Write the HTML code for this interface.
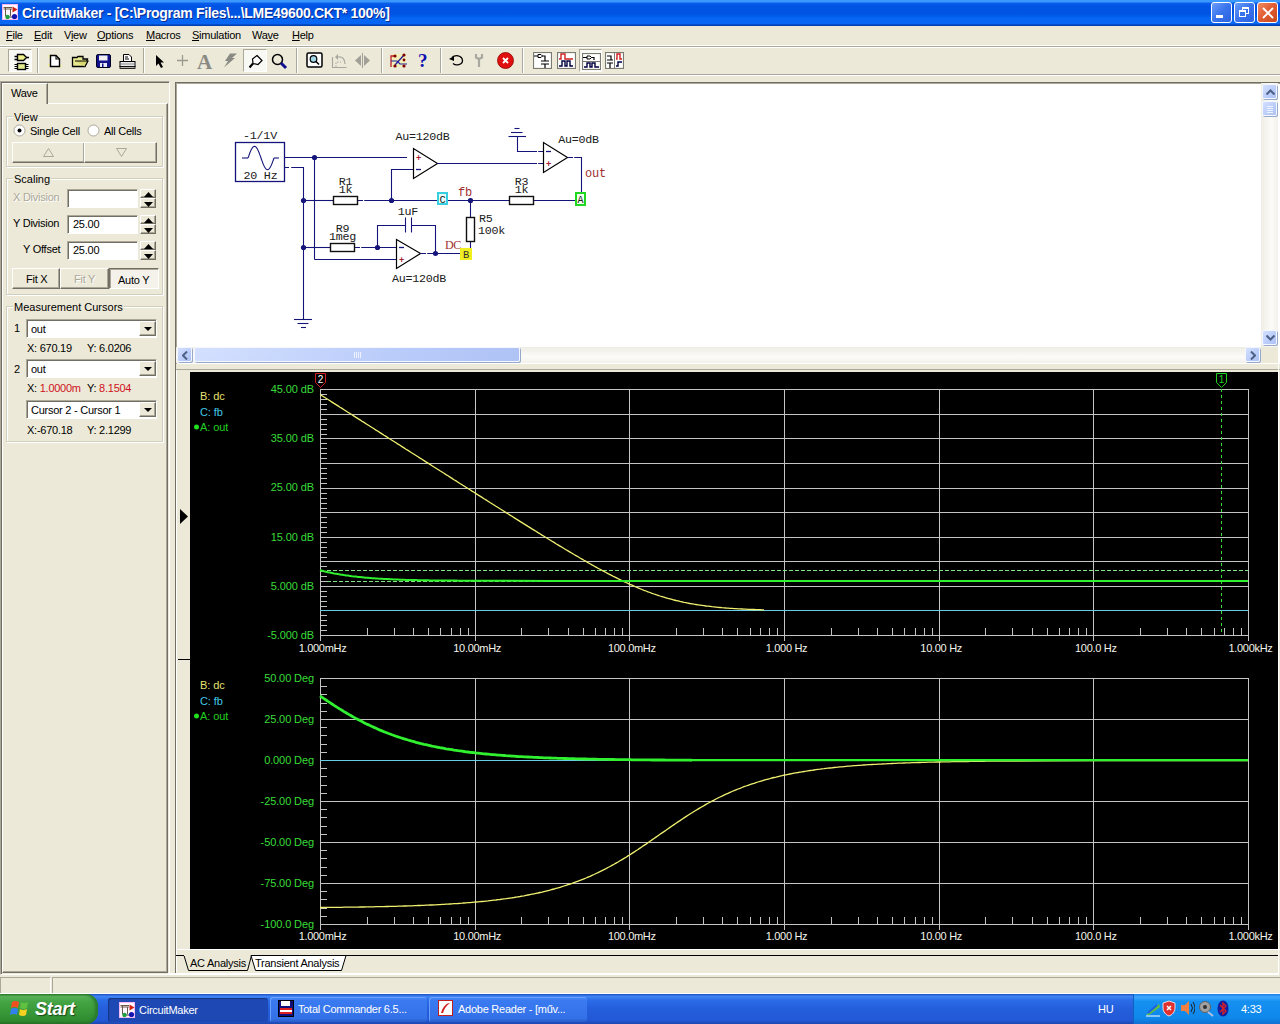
<!DOCTYPE html>
<html><head><meta charset="utf-8"><style>
*{margin:0;padding:0;box-sizing:border-box}
html,body{width:1280px;height:1024px;overflow:hidden;background:#ECE9D8;font-family:"Liberation Sans",sans-serif;font-size:11px;color:#000}
.a{position:absolute;white-space:nowrap;letter-spacing:-0.25px}
.u{text-decoration:underline}
.btn{position:absolute;background:#ECE9D8;border-top:1px solid #fff;border-left:1px solid #fff;border-right:1px solid #716F64;border-bottom:1px solid #716F64;box-shadow:inset -1px -1px 0 #ACA899}
.edit{position:absolute;background:#fff;border-top:1px solid #ACA899;border-left:1px solid #ACA899;border-bottom:1px solid #fff;border-right:1px solid #fff;box-shadow:inset 1px 1px 0 #716F64}
.grp{position:absolute;border:1px solid #D0D0BF;box-shadow:inset 1px 1px 0 #fff, 1px 1px 0 #fff}
.gl{position:absolute;background:#ECE9D8;padding:0 1px;line-height:12px}
.sep{position:absolute;top:48px;width:2px;height:25px;border-left:1px solid #ACA899;border-right:1px solid #fff}
</style></head><body>

<div class="a" style="left:0;top:0;width:1280px;height:26px;background:linear-gradient(#3A98FF 0px,#3A98FF 1.5px,#0A5CEB 3.5px,#0053E3 6px,#0054E4 14px,#005EEE 16.5px,#0866F4 18px,#0866F4 23.5px,#0044BC 25px,#003AA8 26px)"></div>
<svg class="a" style="left:2px;top:4px" width="16" height="16">
 <rect x="0.5" y="0.5" width="15" height="15" fill="#FFF6FF" stroke="#F4B8F4"/>
 <path d="M1.5 3.5H10M1.5 5H10M3.5 3V12.5M8.5 5V12" stroke="#6A5A4A" stroke-width="1" fill="none"/>
 <path d="M5 13H12" stroke="#404040"/>
 <path d="M10.5 2.5L15.5 5.5L10.5 8.5Z" fill="#D02010"/><circle cx="12.5" cy="12.5" r="2.6" fill="#1414B0"/><circle cx="5.5" cy="13" r="2.2" fill="#20A040"/>
</svg>
<div class="a" style="left:22px;top:5px;color:#fff;font-weight:bold;font-size:14px;letter-spacing:-0.3px;text-shadow:1px 1px 0 #0A2A90">CircuitMaker - [C:\Program Files\...\LME49600.CKT* 100%]</div>
<div class="a" style="left:1211px;top:2px;width:21px;height:21px;border:1px solid #fff;border-radius:3px;background:linear-gradient(135deg,#6A9CFA,#3A74EC 50%,#2A62E0)"><div class="a" style="left:4px;top:12px;width:7px;height:3px;background:#fff"></div></div>
<div class="a" style="left:1234px;top:2px;width:21px;height:21px;border:1px solid #fff;border-radius:3px;background:linear-gradient(135deg,#6A9CFA,#3A74EC 50%,#2A62E0)"><div class="a" style="left:7px;top:4px;width:7px;height:7px;border:1px solid #fff;border-top-width:2px"></div><div class="a" style="left:4px;top:7px;width:7px;height:7px;border:1px solid #fff;border-top-width:2px;background:#3A74EC"></div></div>
<div class="a" style="left:1257px;top:2px;width:21px;height:21px;border:1px solid #fff;border-radius:3px;background:linear-gradient(135deg,#F08A60,#E05A30 50%,#C84A20)">
 <svg class="a" style="left:3px;top:3px" width="14" height="14"><path d="M2 2L12 12M12 2L2 12" stroke="#fff" stroke-width="1.9"/></svg></div>

<div class="a" style="left:6px;top:29px"><span class="u">F</span>ile</div>
<div class="a" style="left:34px;top:29px"><span class="u">E</span>dit</div>
<div class="a" style="left:64px;top:29px">V<span class="u">i</span>ew</div>
<div class="a" style="left:97px;top:29px"><span class="u">O</span>ptions</div>
<div class="a" style="left:146px;top:29px"><span class="u">M</span>acros</div>
<div class="a" style="left:192px;top:29px"><span class="u">S</span>imulation</div>
<div class="a" style="left:252px;top:29px">Wa<span class="u">v</span>e</div>
<div class="a" style="left:292px;top:29px"><span class="u">H</span>elp</div>
<div class="a" style="left:0;top:45px;width:1280px;height:1px;background:#FFFFFF"></div><div class="a" style="left:0;top:46px;width:1280px;height:1px;background:#ACA899"></div>
<div class="a" style="left:0;top:47px;width:1280px;height:1px;background:#fff"></div>
<div class="a" style="left:0;top:74px;width:1280px;height:1px;background:#ACA899"></div>
<div class="a" style="left:0;top:75px;width:1280px;height:1px;background:#fff"></div>

<div class="a" style="left:8px;top:49px;width:24px;height:23px;background:#F8F8F4;border-top:1px solid #ACA899;border-left:1px solid #ACA899;border-right:1px solid #fff;border-bottom:1px solid #fff"></div>
<svg class="a" style="left:8px;top:49px" width="24" height="23"><path d="M9.5 5.5H15.5L18.5 8.5L15.5 11.5H9.5Z" fill="#EEF08A" stroke="#000" stroke-width="1.4"/><path d="M6.5 7.5H9M6.5 10.5H9M18.5 8.5H21" stroke="#000" stroke-width="1.3"/><rect x="9.5" y="14.5" width="8" height="6" fill="#E4EA90" stroke="#000" stroke-width="1.4"/><path d="M6.5 15.5H9M6.5 17.5H9M6.5 19.5H9M18 15.5H20.5M18 17.5H20.5M18 19.5H20.5" stroke="#000" stroke-width="1.2"/></svg>
<div class="sep" style="left:37px"></div>
<div class="sep" style="left:143px"></div>
<div class="sep" style="left:296px"></div>
<div class="sep" style="left:381px"></div>
<div class="sep" style="left:440px"></div>
<div class="sep" style="left:522px"></div>
<svg class="a" style="left:47px;top:53px" width="16" height="16"><circle cx="3" cy="3" r="1.5" fill="#F8F870" opacity="0.7"/><circle cx="13" cy="13" r="1.5" fill="#F8F870" opacity="0.7"/><circle cx="2" cy="12" r="1.2" fill="#F8F870" opacity="0.6"/><path d="M3.5 2.5H9L12.5 6V13.5H3.5Z" fill="#fff" stroke="#000" stroke-width="1.4"/><path d="M9 2.5V6H12.5" fill="none" stroke="#000" stroke-width="1.1"/></svg>
<svg class="a" style="left:71px;top:55px" width="18" height="13"><path d="M1.5 2.5H6L7 1.5H12V4H16.5L14 11.5H1.5Z" fill="#E8E890" stroke="#000" stroke-width="1.3"/><path d="M4 6H17L14 11.5" fill="#D8D870" stroke="#000" stroke-width="1.2"/></svg>
<svg class="a" style="left:96px;top:54px" width="15" height="14"><rect x="0.5" y="0.5" width="14" height="13" rx="1.5" fill="#12128C" stroke="#000020"/><rect x="3" y="1.5" width="8.5" height="5" fill="#F0F0F0"/><rect x="4" y="9" width="7" height="4" fill="#E8E8F0"/><rect x="6" y="9.5" width="1.5" height="3.5" fill="#12128C"/></svg>
<svg class="a" style="left:119px;top:53px" width="17" height="16"><path d="M4.5 1.5H10L12.5 4V8.5H4.5Z" fill="#fff" stroke="#000"/><path d="M6 4H9M6 6H10" stroke="#000"/><rect x="1" y="8.5" width="15" height="5" fill="#E8E8E8" stroke="#000"/><path d="M2 11H15" stroke="#909090"/><rect x="1" y="13.5" width="15" height="2" fill="#B0B0A8" stroke="#000" stroke-width="0.8"/></svg>
<svg class="a" style="left:155px;top:54px" width="10" height="15"><path d="M1 1V12L3.5 9.5L6 14L8 13L5.5 8.5H9Z" fill="#000"/></svg>
<svg class="a" style="left:176px;top:54px" width="13" height="13"><path d="M6.5 1V12M1 6.5H12" stroke="#9A9A90" stroke-width="1.3"/></svg>
<div class="a" style="left:197px;top:50px;font-family:'Liberation Serif',serif;font-size:21px;font-weight:bold;color:#8A8A84">A</div>
<svg class="a" style="left:222px;top:53px" width="16" height="15"><path d="M8 0.5H15L10 5H13L2 14.5L6 8H3Z" fill="#8A8A84"/></svg>
<div class="a" style="left:243px;top:49px;width:24px;height:23px;background:#F8F8F4;border-top:1px solid #ACA899;border-left:1px solid #ACA899;border-right:1px solid #fff;border-bottom:1px solid #fff"></div>
<svg class="a" style="left:248px;top:54px" width="15" height="15"><path d="M9 1.5L14 6.5L10 10.5L5 9.5L4.5 5Z" fill="#fff" stroke="#000" stroke-width="1.2"/><path d="M5 9.5L1.5 13.5" stroke="#000" stroke-width="2"/></svg>
<svg class="a" style="left:271px;top:53px" width="17" height="17"><circle cx="6.5" cy="6.5" r="5" fill="none" stroke="#000" stroke-width="1.5"/><path d="M10 10L15 15" stroke="#101090" stroke-width="3"/></svg>
<svg class="a" style="left:306px;top:52px" width="18" height="17"><rect x="1" y="1" width="15" height="14" rx="1.5" fill="#fff" stroke="#000" stroke-width="1.5"/><circle cx="7.5" cy="7" r="3.3" fill="#A0D8E8" stroke="#000" stroke-width="1.2"/><path d="M10 9.5L13 12.5" stroke="#000" stroke-width="1.6"/></svg>
<svg class="a" style="left:331px;top:53px" width="17" height="16"><path d="M1.5 4V14.5H15.5" fill="none" stroke="#A8A8A0" stroke-width="1.2"/><path d="M5 14V9H10" fill="none" stroke="#A8A8A0" stroke-dasharray="1.5,1.5"/><path d="M7 4C11 3 14 6 14 11" fill="none" stroke="#A8A8A0" stroke-width="1.2"/><path d="M7 1V7L4 4Z" fill="#A8A8A0"/></svg>
<svg class="a" style="left:354px;top:53px" width="17" height="15"><path d="M7 2L1 7.5L7 13Z" fill="#A0A098"/><path d="M10 2L16 7.5L10 13Z" fill="#A0A098"/><path d="M8.5 0V15" stroke="#A0A098"/></svg>
<svg class="a" style="left:390px;top:52px" width="18" height="17"><rect x="2" y="2" width="14" height="13" fill="#F8F0A0" opacity="0.6"/><path d="M1 15V4H5" fill="none" stroke="#C02020" stroke-width="1.3"/><path d="M5 13L14 3" stroke="#2020A0" stroke-width="1.3"/><path d="M1 9H7L10 12H17" fill="none" stroke="#2020A0" stroke-width="1.2"/><circle cx="5" cy="4" r="1.6" fill="#800000"/><circle cx="14" cy="3" r="1.6" fill="#800000"/><circle cx="5" cy="14" r="1.6" fill="#800000"/><circle cx="14" cy="14" r="1.6" fill="#800000"/><circle cx="14" cy="8" r="1.4" fill="#800000"/></svg>
<div class="a" style="left:418px;top:50px;font-family:'Liberation Serif',serif;font-size:19px;font-weight:bold;color:#1010B0">?</div>
<svg class="a" style="left:448px;top:53px" width="17" height="15"><path d="M4 4.5C7 1.5 14 2 14.5 7.5C14.5 12 8 13 5 10.5" fill="none" stroke="#000" stroke-width="1.3"/><path d="M1 6L6 3V8Z" fill="#000"/></svg>
<svg class="a" style="left:474px;top:53px" width="10" height="16"><path d="M2 1V4.5L5 6L8 4.5V1M5 6V14" fill="none" stroke="#A8A8A0" stroke-width="2.2"/></svg>
<svg class="a" style="left:497px;top:52px" width="17" height="17"><circle cx="8.5" cy="8.5" r="8" fill="#E01010"/><circle cx="8.5" cy="8.5" r="8" fill="none" stroke="#900000" stroke-width="0.8"/><path d="M6 6L11 11M11 6L6 11" stroke="#fff" stroke-width="1.8"/></svg>
<svg class="a" style="left:533px;top:52px" width="19" height="17"><rect x="0.5" y="0.5" width="18" height="16" fill="#fff" stroke="#7A7A70" stroke-width="1.2"/><path d="M1 4H5M9 4H12V9M12 12V16M8 9H16M8 12H16" fill="none" stroke="#000" stroke-width="1.2"/><path d="M5 2.5H8L9.5 4L8 5.5H5Z" fill="#fff" stroke="#000"/></svg>
<svg class="a" style="left:557px;top:52px" width="19" height="17"><rect x="0.5" y="0.5" width="18" height="16" fill="#fff" stroke="#7A7A70" stroke-width="1.2"/><path d="M2 7H4V2H8V7H16" fill="none" stroke="#D02020" stroke-width="1.4"/><path d="M2 14H5V9H8V14H10V9H13V14H16" fill="none" stroke="#000040" stroke-width="1.4"/></svg>
<div class="a" style="left:579px;top:49px;width:23px;height:23px;background:#F8F8F4;border-top:1px solid #ACA899;border-left:1px solid #ACA899;border-right:1px solid #fff;border-bottom:1px solid #fff"></div>
<svg class="a" style="left:582px;top:53px" width="19" height="17"><rect x="0.5" y="0.5" width="18" height="16" fill="#fff" stroke="#7A7A70" stroke-width="1.2"/><path d="M1 8.5H18" stroke="#7A7A70"/><path d="M1 4.5H5M9 4.5H12V7" fill="none" stroke="#000" stroke-width="1.2"/><path d="M5 3H8L9.5 4.5L8 6H5Z" fill="#fff" stroke="#000"/><path d="M2 14H5V10H8V14H10V10H13V14H17" fill="none" stroke="#000040" stroke-width="1.4"/></svg>
<svg class="a" style="left:605px;top:52px" width="19" height="17"><rect x="0.5" y="0.5" width="18" height="16" fill="#fff" stroke="#7A7A70" stroke-width="1.2"/><path d="M9.5 1V16" stroke="#7A7A70"/><path d="M2 4H6V8M2 8H8M2 11H8M5 11V16" fill="none" stroke="#000" stroke-width="1.2"/><path d="M11 7H12V2H15V7H17" fill="none" stroke="#D02020" stroke-width="1.4"/><path d="M11 14H13V10H17" fill="none" stroke="#000040" stroke-width="1.4"/></svg>
<div class="a" style="left:0;top:81px;width:170px;height:894px;border-top:1px solid #ACA899;border-left:1px solid #ACA899;border-right:1px solid #fff;border-bottom:1px solid #fff;box-shadow:inset 1px 1px 0 #716F64"></div>
<div class="a" style="left:2px;top:103px;width:166px;height:870px;border-top:1px solid #fff;border-left:1px solid #fff;border-right:1px solid #716F64;border-bottom:1px solid #716F64;box-shadow:inset -1px -1px 0 #ACA899"></div>
<div class="a" style="left:2px;top:83px;width:46px;height:21px;background:#ECE9D8;border-top:1px solid #fff;border-left:1px solid #fff;border-right:1px solid #716F64;box-shadow:inset -1px 0 0 #ACA899"></div>
<div class="a" style="left:11px;top:87px">Wave</div>
<div class="grp" style="left:6px;top:116px;width:157px;height:51px"></div>
<div class="gl" style="left:13px;top:111px">View</div>
<svg class="a" style="left:13px;top:124px" width="13" height="13"><circle cx="6.5" cy="6.5" r="5.5" fill="#fff" stroke="#ACA899"/><circle cx="6.5" cy="6.5" r="2" fill="#000"/></svg>
<div class="a" style="left:30px;top:125px">Single Cell</div>
<svg class="a" style="left:87px;top:124px" width="13" height="13"><circle cx="6.5" cy="6.5" r="5.5" fill="#fff" stroke="#ACA899"/></svg>
<div class="a" style="left:104px;top:125px">All Cells</div>
<div class="btn" style="left:12px;top:142px;width:73px;height:21px"><svg class="a" style="left:30px;top:5px" width="11" height="9"><path d="M5.5 0.5L10.5 8.5H0.5Z" fill="none" stroke="#ACA899"/></svg></div>
<div class="btn" style="left:84px;top:142px;width:73px;height:21px"><svg class="a" style="left:31px;top:5px" width="11" height="9"><path d="M0.5 0.5H10.5L5.5 8.5Z" fill="none" stroke="#ACA899"/></svg></div>
<div class="grp" style="left:6px;top:178px;width:157px;height:117px"></div>
<div class="gl" style="left:13px;top:173px">Scaling</div>
<div class="a" style="left:13px;top:191px;color:#ACA899;text-shadow:1px 1px 0 #fff">X Division</div>
<div class="edit" style="left:67px;top:189px;width:71px;height:19px"></div>
<div class="btn" style="left:140px;top:189px;width:16px;height:9px"><svg class="a" style="left:3px;top:2px" width="9" height="5"><path d="M4.5 0L9 5H0Z" fill="#000"/></svg></div><div class="btn" style="left:140px;top:198px;width:16px;height:10px"><svg class="a" style="left:3px;top:3px" width="9" height="5"><path d="M0 0H9L4.5 5Z" fill="#000"/></svg></div>
<div class="a" style="left:13px;top:217px">Y Division</div>
<div class="edit" style="left:67px;top:215px;width:71px;height:19px"><div class="a" style="left:5px;top:2px">25.00</div></div>
<div class="btn" style="left:140px;top:215px;width:16px;height:9px"><svg class="a" style="left:3px;top:2px" width="9" height="5"><path d="M4.5 0L9 5H0Z" fill="#000"/></svg></div><div class="btn" style="left:140px;top:224px;width:16px;height:10px"><svg class="a" style="left:3px;top:3px" width="9" height="5"><path d="M0 0H9L4.5 5Z" fill="#000"/></svg></div>
<div class="a" style="left:23px;top:243px">Y Offset</div>
<div class="edit" style="left:67px;top:241px;width:71px;height:19px"><div class="a" style="left:5px;top:2px">25.00</div></div>
<div class="btn" style="left:140px;top:241px;width:16px;height:9px"><svg class="a" style="left:3px;top:2px" width="9" height="5"><path d="M4.5 0L9 5H0Z" fill="#000"/></svg></div><div class="btn" style="left:140px;top:250px;width:16px;height:10px"><svg class="a" style="left:3px;top:3px" width="9" height="5"><path d="M0 0H9L4.5 5Z" fill="#000"/></svg></div>
<div class="btn" style="left:12px;top:268px;width:48px;height:21px"><div class="a" style="left:13px;top:4px">Fit X</div></div>
<div class="btn" style="left:60px;top:268px;width:49px;height:21px"><div class="a" style="left:13px;top:4px;color:#ACA899;text-shadow:1px 1px 0 #fff">Fit Y</div></div>
<div class="a" style="left:109px;top:268px;width:50px;height:21px;background:#F4F2EA;border-top:1px solid #716F64;border-left:1px solid #716F64;border-right:1px solid #fff;border-bottom:1px solid #fff;box-shadow:inset 1px 1px 0 #ACA899"><div class="a" style="left:8px;top:5px">Auto Y</div></div>
<div class="grp" style="left:6px;top:306px;width:157px;height:136px"></div>
<div class="gl" style="left:13px;top:301px">Measurement Cursors</div>
<div class="a" style="left:14px;top:322px">1</div>
<div class="edit" style="left:26px;top:319px;width:131px;height:19px"><div class="a" style="left:4px;top:3px">out</div><div class="btn" style="left:112px;top:1px;width:17px;height:15px"><svg class="a" style="left:4px;top:5px" width="8" height="4"><path d="M0 0H8L4 4Z" fill="#000"/></svg></div></div>
<div class="a" style="left:27px;top:342px">X: 670.19</div><div class="a" style="left:87px;top:342px">Y: 6.0206</div>
<div class="a" style="left:14px;top:363px">2</div>
<div class="edit" style="left:26px;top:359px;width:131px;height:19px"><div class="a" style="left:4px;top:3px">out</div><div class="btn" style="left:112px;top:1px;width:17px;height:15px"><svg class="a" style="left:4px;top:5px" width="8" height="4"><path d="M0 0H8L4 4Z" fill="#000"/></svg></div></div>
<div class="a" style="left:27px;top:382px">X: <span style="color:#D01020">1.0000m</span></div><div class="a" style="left:87px;top:382px">Y: <span style="color:#D01020">8.1504</span></div>
<div class="edit" style="left:26px;top:400px;width:131px;height:19px"><div class="a" style="left:4px;top:3px">Cursor 2 - Cursor 1</div><div class="btn" style="left:112px;top:1px;width:17px;height:15px"><svg class="a" style="left:4px;top:5px" width="8" height="4"><path d="M0 0H8L4 4Z" fill="#000"/></svg></div></div>
<div class="a" style="left:27px;top:424px">X:-670.18</div><div class="a" style="left:87px;top:424px">Y: 2.1299</div>
<div class="a" style="left:175px;top:82px;width:1105px;height:282px;background:#fff;border-top:1px solid #716F64;border-left:1px solid #716F64;box-shadow:inset 1px 1px 0 #ACA899"></div>
<svg class="a" style="left:0;top:0" width="1280" height="370"><rect x="235.5" y="142.5" width="49" height="39" fill="none" stroke="#14147A" stroke-width="1.3"/>
<polyline points="242,158 248,158" fill="none" stroke="#14147A" stroke-width="1.1"/>
<polyline points="248.0,158.0 248.7,156.2 249.3,154.4 249.9,152.7 250.6,151.1 251.2,149.7 251.9,148.5 252.6,147.6 253.2,146.9 253.8,146.4 254.5,146.3 255.2,146.4 255.8,146.9 256.4,147.6 257.1,148.5 257.8,149.7 258.4,151.1 259.1,152.7 259.7,154.4 260.4,156.2 261.0,158.0 261.6,159.8 262.3,161.6 262.9,163.3 263.6,164.9 264.2,166.3 264.9,167.5 265.6,168.4 266.2,169.1 266.9,169.6 267.5,169.7 268.1,169.6 268.8,169.1 269.4,168.4 270.1,167.5 270.8,166.3 271.4,164.9 272.1,163.3 272.7,161.6 273.4,159.8 274.0,158.0" fill="none" stroke="#14147A" stroke-width="1.1"/>
<polyline points="274,158 279,158" fill="none" stroke="#14147A" stroke-width="1.1"/>
<text x="260" y="139" fill="#202020" font-family="Liberation Mono" font-size="11.7" text-anchor="middle" >-1/1V</text>
<text x="260.5" y="179" fill="#202020" font-family="Liberation Mono" font-size="11.7" text-anchor="middle" >20 Hz</text>
<line x1="284.5" y1="157.5" x2="408" y2="157.5" stroke="#14147A" stroke-width="1.1"/>
<polyline points="284.5,167.5 303.5,167.5 303.5,319" fill="none" stroke="#14147A" stroke-width="1.1"/>
<line x1="314.5" y1="157.5" x2="314.5" y2="259.5" stroke="#14147A" stroke-width="1.1"/>
<circle cx="314.5" cy="157.5" r="2.6" fill="#14147A"/>
<line x1="303.5" y1="200.5" x2="333" y2="200.5" stroke="#14147A" stroke-width="1.1"/>
<line x1="358" y1="200.5" x2="575" y2="200.5" stroke="#14147A" stroke-width="1.1"/>
<rect x="333.5" y="196.5" width="24" height="8" fill="#fff" stroke="#101010" stroke-width="1.4"/>
<circle cx="303.5" cy="200.5" r="2.6" fill="#14147A"/>
<circle cx="391.5" cy="200.5" r="2.6" fill="#14147A"/>
<circle cx="470.5" cy="200.5" r="2.6" fill="#14147A"/>
<text x="345.5" y="185" fill="#202020" font-family="Liberation Mono" font-size="11.7" text-anchor="middle" >R1</text>
<text x="345.5" y="193" fill="#202020" font-family="Liberation Mono" font-size="11.7" text-anchor="middle" >1k</text>
<rect x="509.5" y="196.5" width="24" height="8" fill="#fff" stroke="#101010" stroke-width="1.4"/>
<text x="521.5" y="185" fill="#202020" font-family="Liberation Mono" font-size="11.7" text-anchor="middle" >R3</text>
<text x="521.5" y="193" fill="#202020" font-family="Liberation Mono" font-size="11.7" text-anchor="middle" >1k</text>
<text x="465" y="196" fill="#A03030" font-family="Liberation Mono" font-size="12" text-anchor="middle" >fb</text>
<polyline points="391.5,200.5 391.5,169.5 413,169.5" fill="none" stroke="#14147A" stroke-width="1.1"/>
<polygon points="413.5,148.5 413.5,178.5 437.5,163.5" fill="#fff" stroke="#000" stroke-width="1.2"/>
<line x1="437.5" y1="163.5" x2="543" y2="163.5" stroke="#14147A" stroke-width="1.1"/>
<text x="422.5" y="140" fill="#202020" font-family="Liberation Mono" font-size="11.7" text-anchor="middle" >Au=120dB</text>
<text x="418.5" y="161" fill="#A82030" font-family="Liberation Sans" font-size="9" font-weight="bold" text-anchor="middle">+</text>
<line x1="416" y1="169.5" x2="421" y2="169.5" stroke="#14147A" stroke-width="1.3"/>
<polyline points="517.5,136.5 517.5,151.5 543,151.5" fill="none" stroke="#14147A" stroke-width="1.1"/>
<line x1="508.5" y1="136.5" x2="526" y2="136.5" stroke="#14147A" stroke-width="1.1"/>
<line x1="511" y1="132.5" x2="522.5" y2="132.5" stroke="#14147A" stroke-width="1.1"/>
<line x1="514.5" y1="128.5" x2="519.5" y2="128.5" stroke="#14147A" stroke-width="1.1"/>
<polygon points="543.5,142.5 543.5,172.5 567.5,157.5" fill="#fff" stroke="#000" stroke-width="1.2"/>
<polyline points="567.5,157.5 581.5,157.5 581.5,193" fill="none" stroke="#14147A" stroke-width="1.1"/>
<text x="578.5" y="143" fill="#202020" font-family="Liberation Mono" font-size="11.7" text-anchor="middle" >Au=0dB</text>
<text x="548.5" y="167" fill="#A82030" font-family="Liberation Sans" font-size="9" font-weight="bold" text-anchor="middle">+</text>
<line x1="546" y1="151.5" x2="551" y2="151.5" stroke="#14147A" stroke-width="1.3"/>
<text x="595.5" y="177" fill="#A03030" font-family="Liberation Mono" font-size="12" text-anchor="middle" >out</text>
<rect x="438" y="193" width="9" height="11" fill="#E8FCFC" stroke="#38D0E0" stroke-width="2"/>
<text x="442.5" y="202.5" fill="#202020" font-family="Liberation Mono" font-size="10.5" text-anchor="middle" >C</text>
<rect x="576" y="193" width="9" height="12" fill="#F0FFF0" stroke="#20D820" stroke-width="2"/>
<text x="580.5" y="203" fill="#202020" font-family="Liberation Mono" font-size="10" text-anchor="middle" >A</text>
<line x1="303.5" y1="247.5" x2="330" y2="247.5" stroke="#14147A" stroke-width="1.1"/>
<line x1="355" y1="247.5" x2="396" y2="247.5" stroke="#14147A" stroke-width="1.1"/>
<rect x="330.5" y="243.5" width="24" height="8" fill="#fff" stroke="#101010" stroke-width="1.4"/>
<text x="342.5" y="232" fill="#202020" font-family="Liberation Mono" font-size="11.7" text-anchor="middle" >R9</text>
<text x="342.5" y="240" fill="#202020" font-family="Liberation Mono" font-size="11.7" text-anchor="middle" >1meg</text>
<circle cx="303.5" cy="247.5" r="2.6" fill="#14147A"/>
<circle cx="377.5" cy="247.5" r="2.6" fill="#14147A"/>
<polyline points="377.5,247.5 377.5,225.5 405.5,225.5" fill="none" stroke="#14147A" stroke-width="1.1"/>
<line x1="405.5" y1="217.5" x2="405.5" y2="232.5" stroke="#14147A" stroke-width="1.1"/>
<line x1="411.5" y1="217.5" x2="411.5" y2="232.5" stroke="#14147A" stroke-width="1.1"/>
<polyline points="411.5,225.5 435.5,225.5 435.5,253.5" fill="none" stroke="#14147A" stroke-width="1.1"/>
<text x="408" y="215" fill="#202020" font-family="Liberation Mono" font-size="11.7" text-anchor="middle" >1uF</text>
<line x1="314.5" y1="259.5" x2="396" y2="259.5" stroke="#14147A" stroke-width="1.1"/>
<polygon points="396.5,239.5 396.5,268.5 420.5,253.5" fill="#fff" stroke="#000" stroke-width="1.2"/>
<line x1="420.5" y1="253.5" x2="461" y2="253.5" stroke="#14147A" stroke-width="1.1"/>
<circle cx="435.5" cy="253.5" r="2.6" fill="#14147A"/>
<text x="401.5" y="263" fill="#A82030" font-family="Liberation Sans" font-size="9" font-weight="bold" text-anchor="middle">+</text>
<line x1="399" y1="247.5" x2="404" y2="247.5" stroke="#14147A" stroke-width="1.3"/>
<text x="419" y="282" fill="#202020" font-family="Liberation Mono" font-size="11.7" text-anchor="middle" >Au=120dB</text>
<line x1="470.5" y1="200.5" x2="470.5" y2="217" stroke="#14147A" stroke-width="1.1"/>
<line x1="470.5" y1="241.5" x2="470.5" y2="248" stroke="#14147A" stroke-width="1.1"/>
<rect x="466.5" y="217.5" width="8" height="24" fill="#fff" stroke="#101010" stroke-width="1.4"/>
<text x="479" y="222" fill="#202020" font-family="Liberation Mono" font-size="11.7" text-anchor="start" >R5</text>
<text x="478" y="234" fill="#202020" font-family="Liberation Mono" font-size="11.7" text-anchor="start" >100k</text>
<text x="453" y="249" fill="#A03030" font-family="Liberation Serif" font-size="12" text-anchor="middle" >DC</text>
<rect x="460" y="248" width="12" height="12" fill="#F0F020"/>
<text x="466" y="258" fill="#303030" font-family="Liberation Mono" font-size="10.5" text-anchor="middle" >B</text>
<rect x="289" y="166.0" width="1.2" height="3" fill="#fff"/>
<rect x="290" y="166.0" width="1.2" height="3" fill="#fff"/>
<rect x="407" y="156.0" width="1.2" height="3" fill="#fff"/>
<rect x="537" y="150.0" width="1.2" height="3" fill="#fff"/>
<rect x="537" y="162.0" width="1.2" height="3" fill="#fff"/>
<rect x="573" y="156.0" width="1.2" height="3" fill="#fff"/>
<rect x="363" y="199.0" width="1.2" height="3" fill="#fff"/>
<rect x="360" y="246.0" width="1.2" height="3" fill="#fff"/>
<rect x="426" y="252.0" width="1.2" height="3" fill="#fff"/>
<line x1="294" y1="319.5" x2="312" y2="319.5" stroke="#14147A" stroke-width="1.1"/>
<line x1="297.5" y1="323.5" x2="308.5" y2="323.5" stroke="#14147A" stroke-width="1.1"/>
<line x1="301" y1="327.5" x2="306" y2="327.5" stroke="#14147A" stroke-width="1.1"/></svg>
<div class="a" style="left:1261px;top:83px;width:17px;height:264px;background:linear-gradient(90deg,#EEEDE5,#FBFBF8 60%,#F3F1EC)"></div>
<div class="a" style="left:1262px;top:84px;width:15px;height:15px;background:linear-gradient(135deg,#D4E0FE,#BACCFA 60%,#AEC2F4);border:1px solid #F4F7FF;border-radius:2px;box-shadow:1px 1px 0 #98A8C8"><svg class="a" style="left:3px;top:4px" width="9" height="6"><path d="M0.5 5.5L4.5 1.5L8.5 5.5" fill="none" stroke="#4D6185" stroke-width="2"/></svg></div>
<div class="a" style="left:1262px;top:101px;width:15px;height:15px;background:linear-gradient(135deg,#D4E0FE,#BACCFA 60%,#AEC2F4);border:1px solid #F4F7FF;border-radius:2px;box-shadow:1px 1px 0 #98A8C8"><svg class="a" style="left:3px;top:3px" width="8" height="8"><path d="M1 1.5H7M1 3.5H7M1 5.5H7M1 7.5H7" stroke="#EEF2FE" stroke-width="1"/></svg></div>
<div class="a" style="left:1262px;top:330px;width:15px;height:15px;background:linear-gradient(135deg,#D4E0FE,#BACCFA 60%,#AEC2F4);border:1px solid #F4F7FF;border-radius:2px;box-shadow:1px 1px 0 #98A8C8"><svg class="a" style="left:3px;top:4px" width="9" height="6"><path d="M0.5 0.5L4.5 4.5L8.5 0.5" fill="none" stroke="#4D6185" stroke-width="2"/></svg></div>
<div class="a" style="left:176px;top:347px;width:1085px;height:16px;background:linear-gradient(#EEEDE5,#FBFBF8 60%,#F3F1EC)"></div>
<div class="a" style="left:177px;top:347px;width:15px;height:15px;background:linear-gradient(135deg,#D4E0FE,#BACCFA 60%,#AEC2F4);border:1px solid #F4F7FF;border-radius:2px;box-shadow:1px 1px 0 #98A8C8"><svg class="a" style="left:4px;top:3px" width="6" height="9"><path d="M5 0.5L1 4.5L5 8.5" fill="none" stroke="#4D6185" stroke-width="2"/></svg></div>
<div class="a" style="left:194px;top:347px;width:326px;height:15px;background:linear-gradient(135deg,#D4E0FE,#BACCFA 60%,#AEC2F4);border:1px solid #F4F7FF;border-radius:2px;box-shadow:1px 1px 0 #98A8C8"><svg class="a" style="left:158px;top:3px" width="9" height="8"><path d="M1.5 1V7M3.5 1V7M5.5 1V7M7.5 1V7" stroke="#EEF2FE"/></svg></div>
<div class="a" style="left:1245px;top:347px;width:15px;height:15px;background:linear-gradient(135deg,#D4E0FE,#BACCFA 60%,#AEC2F4);border:1px solid #F4F7FF;border-radius:2px;box-shadow:1px 1px 0 #98A8C8"><svg class="a" style="left:4px;top:3px" width="6" height="9"><path d="M1 0.5L5 4.5L1 8.5" fill="none" stroke="#4D6185" stroke-width="2"/></svg></div>
<div class="a" style="left:1261px;top:347px;width:17px;height:16px;background:#ECE9D8"></div>
<div class="a" style="left:175px;top:369px;width:1105px;height:1px;background:#ACA899"></div>
<div class="a" style="left:175px;top:82px;width:1px;height:891px;background:#716F64"></div>
<div class="a" style="left:176px;top:370px;width:1px;height:602px;background:#fff"></div>
<div class="a" style="left:190px;top:372px;width:1088px;height:577px;background:#000"></div>
<div class="a" style="left:176px;top:949px;width:1104px;height:1px;background:#fff"></div>
<svg class="a" style="left:180px;top:509px" width="9" height="15"><path d="M0 0L8 7.5L0 15Z" fill="#000"/></svg>
<div class="a" style="left:178px;top:659px;width:12px;height:1px;background:#000"></div>
<svg class="a" style="left:0;top:0" width="1280" height="1024"><path d="M320.0 389.5H1249.0" stroke="#C4C4C4"/>
<path d="M320.0 414.5H1249.0" stroke="#C4C4C4"/>
<path d="M320.0 438.5H1249.0" stroke="#C4C4C4"/>
<path d="M320.0 463.5H1249.0" stroke="#C4C4C4"/>
<path d="M320.0 488.5H1249.0" stroke="#C4C4C4"/>
<path d="M320.0 512.5H1249.0" stroke="#C4C4C4"/>
<path d="M320.0 537.5H1249.0" stroke="#C4C4C4"/>
<path d="M320.0 561.5H1249.0" stroke="#C4C4C4"/>
<path d="M320.0 586.5H1249.0" stroke="#C4C4C4"/>
<path d="M320.0 610.5H1249.0" stroke="#C4C4C4"/>
<path d="M320.0 635.5H1249.0" stroke="#C4C4C4"/>
<path d="M320.5 389V641" stroke="#C4C4C4"/>
<path d="M475.5 389V641" stroke="#C4C4C4"/>
<path d="M629.5 389V641" stroke="#C4C4C4"/>
<path d="M784.5 389V641" stroke="#C4C4C4"/>
<path d="M939.5 389V641" stroke="#C4C4C4"/>
<path d="M1093.5 389V641" stroke="#C4C4C4"/>
<path d="M1248.5 389V641" stroke="#C4C4C4"/>
<path d="M320.0 394.5h7M320.0 399.5h7M320.0 404.5h7M320.0 409.5h7M320.0 419.5h7M320.0 424.5h7M320.0 429.5h7M320.0 434.5h7M320.0 443.5h7M320.0 448.5h7M320.0 453.5h7M320.0 458.5h7M320.0 468.5h7M320.0 473.5h7M320.0 478.5h7M320.0 483.5h7M320.0 493.5h7M320.0 498.5h7M320.0 503.5h7M320.0 508.5h7M320.0 517.5h7M320.0 522.5h7M320.0 527.5h7M320.0 532.5h7M320.0 542.5h7M320.0 547.5h7M320.0 552.5h7M320.0 557.5h7M320.0 566.5h7M320.0 571.5h7M320.0 576.5h7M320.0 581.5h7M320.0 591.5h7M320.0 596.5h7M320.0 601.5h7M320.0 606.5h7M320.0 615.5h7M320.0 620.5h7M320.0 625.5h7M320.0 630.5h7M367.5 628v7M394.5 628v7M413.5 628v7M428.5 628v7M440.5 628v7M451.5 628v7M460.5 628v7M468.5 628v7M521.5 628v7M548.5 628v7M568.5 628v7M583.5 628v7M595.5 628v7M605.5 628v7M614.5 628v7M622.5 628v7M676.5 628v7M703.5 628v7M722.5 628v7M737.5 628v7M750.5 628v7M760.5 628v7M769.5 628v7M777.5 628v7M831.5 628v7M858.5 628v7M877.5 628v7M892.5 628v7M904.5 628v7M915.5 628v7M924.5 628v7M932.5 628v7M985.5 628v7M1012.5 628v7M1032.5 628v7M1047.5 628v7M1059.5 628v7M1069.5 628v7M1078.5 628v7M1086.5 628v7M1140.5 628v7M1167.5 628v7M1186.5 628v7M1201.5 628v7M1214.5 628v7M1224.5 628v7M1233.5 628v7M1241.5 628v7" stroke="#C4C4C4"/>
<path d="M320.0 610.5H1248.0" stroke="#68CCE8"/>
<path d="M327.0 570.5H1248.0" stroke="#80E480" stroke-dasharray="4,2"/>
<path d="M327.0 581.5H1248.0" stroke="#80E480" stroke-dasharray="4,2"/>
<path d="M1221.5 389V635" stroke="#30E030" stroke-dasharray="3,3"/>
<polyline points="320.0,394.5 322.0,395.7 324.0,397.0 326.0,398.3 328.0,399.5 330.0,400.8 332.0,402.1 334.0,403.4 336.0,404.6 338.0,405.9 340.0,407.2 342.0,408.4 344.0,409.7 346.0,411.0 348.0,412.3 350.0,413.5 352.0,414.8 354.0,416.1 356.0,417.4 358.0,418.6 360.0,419.9 362.0,421.2 364.0,422.4 366.0,423.7 368.0,425.0 370.0,426.3 372.0,427.5 374.0,428.8 376.0,430.1 378.0,431.3 380.0,432.6 382.0,433.9 384.0,435.2 386.0,436.4 388.0,437.7 390.0,439.0 392.0,440.3 394.0,441.5 396.0,442.8 398.0,444.1 400.0,445.3 402.0,446.6 404.0,447.9 406.0,449.2 408.0,450.4 410.0,451.7 412.0,453.0 414.0,454.2 416.0,455.5 418.0,456.8 420.0,458.1 422.0,459.3 424.0,460.6 426.0,461.9 428.0,463.1 430.0,464.4 432.0,465.7 434.0,467.0 436.0,468.2 438.0,469.5 440.0,470.8 442.0,472.0 444.0,473.3 446.0,474.6 448.0,475.8 450.0,477.1 452.0,478.4 454.0,479.7 456.0,480.9 458.0,482.2 460.0,483.5 462.0,484.7 464.0,486.0 466.0,487.3 468.0,488.5 470.0,489.8 472.0,491.1 474.0,492.3 476.0,493.6 478.0,494.9 480.0,496.1 482.0,497.4 484.0,498.7 486.0,499.9 488.0,501.2 490.0,502.5 492.0,503.7 494.0,505.0 496.0,506.3 498.0,507.5 500.0,508.8 502.0,510.0 504.0,511.3 506.0,512.6 508.0,513.8 510.0,515.1 512.0,516.3 514.0,517.6 516.0,518.9 518.0,520.1 520.0,521.4 522.0,522.6 524.0,523.9 526.0,525.1 528.0,526.4 530.0,527.6 532.0,528.9 534.0,530.1 536.0,531.3 538.0,532.6 540.0,533.8 542.0,535.1 544.0,536.3 546.0,537.5 548.0,538.8 550.0,540.0 552.0,541.2 554.0,542.4 556.0,543.7 558.0,544.9 560.0,546.1 562.0,547.3 564.0,548.5 566.0,549.7 568.0,550.9 570.0,552.1 572.0,553.3 574.0,554.5 576.0,555.6 578.0,556.8 580.0,558.0 582.0,559.1 584.0,560.3 586.0,561.4 588.0,562.6 590.0,563.7 592.0,564.9 594.0,566.0 596.0,567.1 598.0,568.2 600.0,569.3 602.0,570.4 604.0,571.4 606.0,572.5 608.0,573.6 610.0,574.6 612.0,575.6 614.0,576.7 616.0,577.7 618.0,578.7 620.0,579.6 622.0,580.6 624.0,581.6 626.0,582.5 628.0,583.4 630.0,584.4 632.0,585.2 634.0,586.1 636.0,587.0 638.0,587.8 640.0,588.7 642.0,589.5 644.0,590.3 646.0,591.0 648.0,591.8 650.0,592.5 652.0,593.3 654.0,594.0 656.0,594.7 658.0,595.3 660.0,596.0 662.0,596.6 664.0,597.2 666.0,597.8 668.0,598.4 670.0,598.9 672.0,599.4 674.0,600.0 676.0,600.5 678.0,600.9 680.0,601.4 682.0,601.8 684.0,602.3 686.0,602.7 688.0,603.1 690.0,603.5 692.0,603.8 694.0,604.2 696.0,604.5 698.0,604.8 700.0,605.1 702.0,605.4 704.0,605.7 706.0,606.0 708.0,606.2 710.0,606.4 712.0,606.7 714.0,606.9 716.0,607.1 718.0,607.3 720.0,607.5 722.0,607.7 724.0,607.8 726.0,608.0 728.0,608.1 730.0,608.3 732.0,608.4 734.0,608.6 736.0,608.7 738.0,608.8 740.0,608.9 742.0,609.0 744.0,609.1 746.0,609.2 748.0,609.3 750.0,609.4 752.0,609.5 754.0,609.5 756.0,609.6 758.0,609.7 760.0,609.7 762.0,609.8 764.0,609.9" fill="none" stroke="#F0F070" stroke-width="1.3"/>
<polyline points="320.0,570.3 322.0,570.8 324.0,571.3 326.0,571.7 328.0,572.2 330.0,572.6 332.0,573.0 334.0,573.4 336.0,573.7 338.0,574.1 340.0,574.4 342.0,574.7 344.0,575.1 346.0,575.4 348.0,575.6 350.0,575.9 352.0,576.2 354.0,576.4 356.0,576.6 358.0,576.9 360.0,577.1 362.0,577.3 364.0,577.5 366.0,577.7 368.0,577.8 370.0,578.0 372.0,578.2 374.0,578.3 376.0,578.4 378.0,578.6 380.0,578.7 382.0,578.8 384.0,578.9 386.0,579.0 388.0,579.1 390.0,579.2 392.0,579.3 394.0,579.4 396.0,579.5 398.0,579.6 400.0,579.7 402.0,579.7 404.0,579.8 406.0,579.9 408.0,579.9 410.0,580.0 412.0,580.0 414.0,580.1 416.0,580.1 418.0,580.2 420.0,580.2 422.0,580.2 424.0,580.3 426.0,580.3 428.0,580.3 430.0,580.4 432.0,580.4 434.0,580.4 436.0,580.5 438.0,580.5 440.0,580.5 442.0,580.5 444.0,580.5 446.0,580.6 448.0,580.6 450.0,580.6 452.0,580.6 454.0,580.6 456.0,580.6 458.0,580.7 460.0,580.7 462.0,580.7 464.0,580.7 466.0,580.7 468.0,580.7 470.0,580.7 472.0,580.7 474.0,580.7 476.0,580.8 478.0,580.8 480.0,580.8 482.0,580.8 484.0,580.8 486.0,580.8 488.0,580.8 490.0,580.8 492.0,580.8 494.0,580.8 496.0,580.8 498.0,580.8 500.0,580.8 550.0,580.9 600.0,580.9 650.0,580.9 700.0,580.9 750.0,580.9 800.0,580.9 850.0,580.9 900.0,580.9 950.0,580.9 1000.0,580.9 1050.0,580.9 1100.0,580.9 1150.0,580.9 1200.0,580.9 1248.0,580.9" fill="none" stroke="#30F030" stroke-width="2"/>
<path d="M320.0 678.5H1249.0" stroke="#C4C4C4"/>
<path d="M320.0 719.5H1249.0" stroke="#C4C4C4"/>
<path d="M320.0 760.5H1249.0" stroke="#C4C4C4"/>
<path d="M320.0 801.5H1249.0" stroke="#C4C4C4"/>
<path d="M320.0 842.5H1249.0" stroke="#C4C4C4"/>
<path d="M320.0 883.5H1249.0" stroke="#C4C4C4"/>
<path d="M320.0 924.5H1249.0" stroke="#C4C4C4"/>
<path d="M320.5 678V930" stroke="#C4C4C4"/>
<path d="M475.5 678V930" stroke="#C4C4C4"/>
<path d="M629.5 678V930" stroke="#C4C4C4"/>
<path d="M784.5 678V930" stroke="#C4C4C4"/>
<path d="M939.5 678V930" stroke="#C4C4C4"/>
<path d="M1093.5 678V930" stroke="#C4C4C4"/>
<path d="M1248.5 678V930" stroke="#C4C4C4"/>
<path d="M320.0 686.5h7M320.0 694.5h7M320.0 703.5h7M320.0 711.5h7M320.0 727.5h7M320.0 735.5h7M320.0 744.5h7M320.0 752.5h7M320.0 768.5h7M320.0 776.5h7M320.0 785.5h7M320.0 793.5h7M320.0 809.5h7M320.0 817.5h7M320.0 826.5h7M320.0 834.5h7M320.0 850.5h7M320.0 858.5h7M320.0 867.5h7M320.0 875.5h7M320.0 891.5h7M320.0 899.5h7M320.0 908.5h7M320.0 916.5h7M367.5 917v7M394.5 917v7M413.5 917v7M428.5 917v7M440.5 917v7M451.5 917v7M460.5 917v7M468.5 917v7M521.5 917v7M548.5 917v7M568.5 917v7M583.5 917v7M595.5 917v7M605.5 917v7M614.5 917v7M622.5 917v7M676.5 917v7M703.5 917v7M722.5 917v7M737.5 917v7M750.5 917v7M760.5 917v7M769.5 917v7M777.5 917v7M831.5 917v7M858.5 917v7M877.5 917v7M892.5 917v7M904.5 917v7M915.5 917v7M924.5 917v7M932.5 917v7M985.5 917v7M1012.5 917v7M1032.5 917v7M1047.5 917v7M1059.5 917v7M1069.5 917v7M1078.5 917v7M1086.5 917v7M1140.5 917v7M1167.5 917v7M1186.5 917v7M1201.5 917v7M1214.5 917v7M1224.5 917v7M1233.5 917v7M1241.5 917v7" stroke="#C4C4C4"/>
<path d="M320.0 760.5H1248.0" stroke="#68CCE8"/>
<polyline points="320.0,907.5 322.0,907.5 324.0,907.5 326.0,907.4 328.0,907.4 330.0,907.4 332.0,907.4 334.0,907.4 336.0,907.3 338.0,907.3 340.0,907.3 342.0,907.3 344.0,907.2 346.0,907.2 348.0,907.2 350.0,907.2 352.0,907.1 354.0,907.1 356.0,907.1 358.0,907.1 360.0,907.0 362.0,907.0 364.0,907.0 366.0,906.9 368.0,906.9 370.0,906.8 372.0,906.8 374.0,906.8 376.0,906.7 378.0,906.7 380.0,906.6 382.0,906.6 384.0,906.6 386.0,906.5 388.0,906.5 390.0,906.4 392.0,906.4 394.0,906.3 396.0,906.3 398.0,906.2 400.0,906.1 402.0,906.1 404.0,906.0 406.0,906.0 408.0,905.9 410.0,905.8 412.0,905.8 414.0,905.7 416.0,905.6 418.0,905.5 420.0,905.5 422.0,905.4 424.0,905.3 426.0,905.2 428.0,905.1 430.0,905.0 432.0,905.0 434.0,904.9 436.0,904.8 438.0,904.7 440.0,904.6 442.0,904.4 444.0,904.3 446.0,904.2 448.0,904.1 450.0,904.0 452.0,903.9 454.0,903.7 456.0,903.6 458.0,903.5 460.0,903.3 462.0,903.2 464.0,903.0 466.0,902.9 468.0,902.7 470.0,902.6 472.0,902.4 474.0,902.2 476.0,902.0 478.0,901.9 480.0,901.7 482.0,901.5 484.0,901.3 486.0,901.1 488.0,900.9 490.0,900.6 492.0,900.4 494.0,900.2 496.0,900.0 498.0,899.7 500.0,899.5 502.0,899.2 504.0,898.9 506.0,898.7 508.0,898.4 510.0,898.1 512.0,897.8 514.0,897.5 516.0,897.1 518.0,896.8 520.0,896.5 522.0,896.1 524.0,895.8 526.0,895.4 528.0,895.0 530.0,894.6 532.0,894.2 534.0,893.8 536.0,893.4 538.0,893.0 540.0,892.5 542.0,892.1 544.0,891.6 546.0,891.1 548.0,890.6 550.0,890.1 552.0,889.5 554.0,889.0 556.0,888.4 558.0,887.9 560.0,887.3 562.0,886.7 564.0,886.0 566.0,885.4 568.0,884.7 570.0,884.1 572.0,883.4 574.0,882.6 576.0,881.9 578.0,881.2 580.0,880.4 582.0,879.6 584.0,878.8 586.0,878.0 588.0,877.1 590.0,876.3 592.0,875.4 594.0,874.5 596.0,873.5 598.0,872.6 600.0,871.6 602.0,870.6 604.0,869.6 606.0,868.6 608.0,867.5 610.0,866.5 612.0,865.4 614.0,864.3 616.0,863.1 618.0,862.0 620.0,860.8 622.0,859.6 624.0,858.4 626.0,857.2 628.0,855.9 630.0,854.7 632.0,853.4 634.0,852.1 636.0,850.8 638.0,849.5 640.0,848.1 642.0,846.8 644.0,845.4 646.0,844.1 648.0,842.7 650.0,841.3 652.0,839.9 654.0,838.5 656.0,837.1 658.0,835.7 660.0,834.3 662.0,832.9 664.0,831.6 666.0,830.2 668.0,828.8 670.0,827.4 672.0,826.0 674.0,824.6 676.0,823.3 678.0,821.9 680.0,820.6 682.0,819.2 684.0,817.9 686.0,816.6 688.0,815.3 690.0,814.0 692.0,812.8 694.0,811.5 696.0,810.3 698.0,809.1 700.0,807.9 702.0,806.7 704.0,805.6 706.0,804.4 708.0,803.3 710.0,802.2 712.0,801.1 714.0,800.1 716.0,799.0 718.0,798.0 720.0,797.0 722.0,796.1 724.0,795.1 726.0,794.2 728.0,793.3 730.0,792.4 732.0,791.5 734.0,790.7 736.0,789.8 738.0,789.0 740.0,788.3 742.0,787.5 744.0,786.7 746.0,786.0 748.0,785.3 750.0,784.6 752.0,783.9 754.0,783.3 756.0,782.6 758.0,782.0 760.0,781.4 762.0,780.8 764.0,780.2 766.0,779.6 768.0,779.1 770.0,778.6 772.0,778.0 774.0,777.5 776.0,777.1 778.0,776.6 780.0,776.1 782.0,775.7 784.0,775.2 786.0,774.8 788.0,774.4 790.0,774.0 792.0,773.6 794.0,773.2 796.0,772.8 798.0,772.5 800.0,772.1 802.0,771.8 804.0,771.5 806.0,771.2 808.0,770.8 810.0,770.5 812.0,770.3 814.0,770.0 816.0,769.7 818.0,769.4 820.0,769.2 822.0,768.9 824.0,768.7 826.0,768.4 828.0,768.2 830.0,768.0 832.0,767.8 834.0,767.5 836.0,767.3 838.0,767.1 840.0,766.9 842.0,766.8 844.0,766.6 846.0,766.4 848.0,766.2 850.0,766.1 852.0,765.9 854.0,765.7 856.0,765.6 858.0,765.4 860.0,765.3 862.0,765.1 864.0,765.0 866.0,764.9 868.0,764.7 870.0,764.6 872.0,764.5 874.0,764.4 876.0,764.3 878.0,764.2 880.0,764.1 882.0,764.0 884.0,763.8 886.0,763.8 888.0,763.7 890.0,763.6 892.0,763.5 894.0,763.4 896.0,763.3 898.0,763.2 900.0,763.1 902.0,763.1 904.0,763.0 906.0,762.9 908.0,762.8 910.0,762.8 912.0,762.7 914.0,762.6 916.0,762.6 918.0,762.5 920.0,762.5 922.0,762.4 924.0,762.3 926.0,762.3 928.0,762.2 930.0,762.2 932.0,762.1 934.0,762.1 936.0,762.0 938.0,762.0 940.0,762.0 942.0,761.9 944.0,761.9 946.0,761.8 948.0,761.8 950.0,761.8 952.0,761.7 954.0,761.7 956.0,761.6 958.0,761.6 960.0,761.6 962.0,761.5 964.0,761.5 966.0,761.5 968.0,761.5 970.0,761.4 972.0,761.4 974.0,761.4 976.0,761.4 978.0,761.3 980.0,761.3 982.0,761.3 984.0,761.3 986.0,761.2 988.0,761.2 990.0,761.2 992.0,761.2 994.0,761.2 996.0,761.1 998.0,761.1 1000.0,761.1 1050.0,760.8 1100.0,760.6 1150.0,760.6 1200.0,760.5 1248.0,760.7" fill="none" stroke="#F0F070" stroke-width="1.3"/>
<polyline points="320.0,696.0 322.0,697.3 324.0,698.7 326.0,700.0 328.0,701.4 330.0,702.7 332.0,704.0 334.0,705.3 336.0,706.6 338.0,707.9 340.0,709.1 342.0,710.3 344.0,711.6 346.0,712.8 348.0,713.9 350.0,715.1 352.0,716.2 354.0,717.4 356.0,718.5 358.0,719.5 360.0,720.6 362.0,721.6 364.0,722.7 366.0,723.7 368.0,724.6 370.0,725.6 372.0,726.5 374.0,727.4 376.0,728.3 378.0,729.2 380.0,730.1 382.0,730.9 384.0,731.7 386.0,732.5 388.0,733.3 390.0,734.0 392.0,734.8 394.0,735.5 396.0,736.2 398.0,736.9 400.0,737.5 402.0,738.2 404.0,738.8 406.0,739.4 408.0,740.0 410.0,740.6 412.0,741.2 414.0,741.7 416.0,742.3 418.0,742.8 420.0,743.3 422.0,743.8 424.0,744.3 426.0,744.7 428.0,745.2 430.0,745.6 432.0,746.1 434.0,746.5 436.0,746.9 438.0,747.3 440.0,747.7 442.0,748.0 444.0,748.4 446.0,748.8 448.0,749.1 450.0,749.4 452.0,749.7 454.0,750.1 456.0,750.4 458.0,750.7 460.0,750.9 462.0,751.2 464.0,751.5 466.0,751.8 468.0,752.0 470.0,752.3 472.0,752.5 474.0,752.7 476.0,753.0 478.0,753.2 480.0,753.4 482.0,753.6 484.0,753.8 486.0,754.0 488.0,754.2 490.0,754.4 492.0,754.6 494.0,754.7 496.0,754.9 498.0,755.1 500.0,755.2 502.0,755.4 504.0,755.5 506.0,755.7 508.0,755.8 510.0,755.9 512.0,756.1 514.0,756.2 516.0,756.3 518.0,756.5 520.0,756.6 522.0,756.7 524.0,756.8 526.0,756.9 528.0,757.0 530.0,757.1 532.0,757.2 534.0,757.3 536.0,757.4 538.0,757.5 540.0,757.6 542.0,757.7 544.0,757.8 546.0,757.8 548.0,757.9 550.0,758.0 552.0,758.1 554.0,758.1 556.0,758.2 558.0,758.3 560.0,758.3 562.0,758.4 564.0,758.5 566.0,758.5 568.0,758.6 570.0,758.6 572.0,758.7 574.0,758.7 576.0,758.8 578.0,758.8 580.0,758.9 582.0,758.9 584.0,759.0 586.0,759.0 588.0,759.1 590.0,759.1 592.0,759.2 594.0,759.2 596.0,759.2 598.0,759.3 600.0,759.3 602.0,759.3 604.0,759.4 606.0,759.4 608.0,759.4 610.0,759.5 612.0,759.5 614.0,759.5 616.0,759.6 618.0,759.6 620.0,759.6 622.0,759.6 624.0,759.7 626.0,759.7 628.0,759.7 630.0,759.7 632.0,759.8 634.0,759.8 636.0,759.8 638.0,759.8 640.0,759.8 642.0,759.9 644.0,759.9 646.0,759.9 648.0,759.9 650.0,759.9 652.0,760.0 654.0,760.0 656.0,760.0 658.0,760.0 660.0,760.0 662.0,760.0 664.0,760.0 666.0,760.1 668.0,760.1 670.0,760.1 672.0,760.1 674.0,760.1 676.0,760.1 678.0,760.1 680.0,760.1 682.0,760.1 684.0,760.2 686.0,760.2 688.0,760.2 690.0,760.2 692.0,760.2" fill="none" stroke="#30F030" stroke-width="2.8"/>
<path d="M690 760.2H1248.0" stroke="#30F030" stroke-width="2.2"/><text x="314" y="393" fill="#38DC38" font-family="Liberation Sans" font-size="11" letter-spacing="-0.1" text-anchor="end">45.00 dB</text><text x="314" y="442.2" fill="#38DC38" font-family="Liberation Sans" font-size="11" letter-spacing="-0.1" text-anchor="end">35.00 dB</text><text x="314" y="491.4" fill="#38DC38" font-family="Liberation Sans" font-size="11" letter-spacing="-0.1" text-anchor="end">25.00 dB</text><text x="314" y="540.6" fill="#38DC38" font-family="Liberation Sans" font-size="11" letter-spacing="-0.1" text-anchor="end">15.00 dB</text><text x="314" y="589.8" fill="#38DC38" font-family="Liberation Sans" font-size="11" letter-spacing="-0.1" text-anchor="end">5.000 dB</text><text x="314" y="639" fill="#38DC38" font-family="Liberation Sans" font-size="11" letter-spacing="-0.1" text-anchor="end">-5.000 dB</text><text x="314" y="682" fill="#38DC38" font-family="Liberation Sans" font-size="11" letter-spacing="-0.1" text-anchor="end">50.00 Deg</text><text x="314" y="723" fill="#38DC38" font-family="Liberation Sans" font-size="11" letter-spacing="-0.1" text-anchor="end">25.00 Deg</text><text x="314" y="764" fill="#38DC38" font-family="Liberation Sans" font-size="11" letter-spacing="-0.1" text-anchor="end">0.000 Deg</text><text x="314" y="805" fill="#38DC38" font-family="Liberation Sans" font-size="11" letter-spacing="-0.1" text-anchor="end">-25.00 Deg</text><text x="314" y="846" fill="#38DC38" font-family="Liberation Sans" font-size="11" letter-spacing="-0.1" text-anchor="end">-50.00 Deg</text><text x="314" y="887" fill="#38DC38" font-family="Liberation Sans" font-size="11" letter-spacing="-0.1" text-anchor="end">-75.00 Deg</text><text x="314" y="928" fill="#38DC38" font-family="Liberation Sans" font-size="11" letter-spacing="-0.1" text-anchor="end">-100.0 Deg</text><text x="322.5" y="652" fill="#F4F4EC" font-family="Liberation Sans" font-size="11" letter-spacing="-0.3" text-anchor="middle">1.000mHz</text><text x="322.5" y="940" fill="#F4F4EC" font-family="Liberation Sans" font-size="11" letter-spacing="-0.3" text-anchor="middle">1.000mHz</text><text x="477.16999999999996" y="652" fill="#F4F4EC" font-family="Liberation Sans" font-size="11" letter-spacing="-0.3" text-anchor="middle">10.00mHz</text><text x="477.16999999999996" y="940" fill="#F4F4EC" font-family="Liberation Sans" font-size="11" letter-spacing="-0.3" text-anchor="middle">10.00mHz</text><text x="631.8399999999999" y="652" fill="#F4F4EC" font-family="Liberation Sans" font-size="11" letter-spacing="-0.3" text-anchor="middle">100.0mHz</text><text x="631.8399999999999" y="940" fill="#F4F4EC" font-family="Liberation Sans" font-size="11" letter-spacing="-0.3" text-anchor="middle">100.0mHz</text><text x="786.51" y="652" fill="#F4F4EC" font-family="Liberation Sans" font-size="11" letter-spacing="-0.3" text-anchor="middle">1.000 Hz</text><text x="786.51" y="940" fill="#F4F4EC" font-family="Liberation Sans" font-size="11" letter-spacing="-0.3" text-anchor="middle">1.000 Hz</text><text x="941.18" y="652" fill="#F4F4EC" font-family="Liberation Sans" font-size="11" letter-spacing="-0.3" text-anchor="middle">10.00 Hz</text><text x="941.18" y="940" fill="#F4F4EC" font-family="Liberation Sans" font-size="11" letter-spacing="-0.3" text-anchor="middle">10.00 Hz</text><text x="1095.85" y="652" fill="#F4F4EC" font-family="Liberation Sans" font-size="11" letter-spacing="-0.3" text-anchor="middle">100.0 Hz</text><text x="1095.85" y="940" fill="#F4F4EC" font-family="Liberation Sans" font-size="11" letter-spacing="-0.3" text-anchor="middle">100.0 Hz</text><text x="1250.52" y="652" fill="#F4F4EC" font-family="Liberation Sans" font-size="11" letter-spacing="-0.3" text-anchor="middle">1.000kHz</text><text x="1250.52" y="940" fill="#F4F4EC" font-family="Liberation Sans" font-size="11" letter-spacing="-0.3" text-anchor="middle">1.000kHz</text><text x="200" y="399.5" fill="#E8E070" font-family="Liberation Sans" font-size="11" letter-spacing="-0.1" text-anchor="start">B: dc</text><text x="200" y="415.5" fill="#40C8E8" font-family="Liberation Sans" font-size="11" letter-spacing="-0.1" text-anchor="start">C: fb</text><text x="200" y="431" fill="#20D020" font-family="Liberation Sans" font-size="11" letter-spacing="-0.1" text-anchor="start">A: out</text><circle cx="196.5" cy="427" r="2.5" fill="#20E020"/><text x="200" y="688.5" fill="#E8E070" font-family="Liberation Sans" font-size="11" letter-spacing="-0.1" text-anchor="start">B: dc</text><text x="200" y="704.5" fill="#40C8E8" font-family="Liberation Sans" font-size="11" letter-spacing="-0.1" text-anchor="start">C: fb</text><text x="200" y="720" fill="#20D020" font-family="Liberation Sans" font-size="11" letter-spacing="-0.1" text-anchor="start">A: out</text><circle cx="196.5" cy="716" r="2.5" fill="#20E020"/><path d="M315.5,373.5H325.5V382.5L320.5,387.5L315.5,382.5Z" fill="#000" stroke="#D02020" stroke-width="1"/><text x="320.5" y="383" fill="#fff" font-family="Liberation Sans" font-size="10" letter-spacing="-0.1" text-anchor="middle">2</text><path d="M1216.5,373.5H1226.5V382.5L1221.5,387.5L1216.5,382.5Z" fill="#000" stroke="#20D020" stroke-width="1"/><text x="1221.5" y="383" fill="#20D020" font-family="Liberation Sans" font-size="10" letter-spacing="-0.1" text-anchor="middle">1</text></svg>
<div class="a" style="left:176px;top:955px;width:1102px;height:1px;background:#000"></div>
<svg class="a" style="left:176px;top:950px" width="200" height="25"><path d="M8,5.5 L12.5,20.5 L71.5,20.5 L75.5,5.5" fill="#ECE9D8" stroke="#000" stroke-width="1"/><path d="M8,5.5 H75.5" stroke="#ECE9D8" stroke-width="1.2"/><path d="M75,5.5 L79.5,20.5 L165.5,20.5 L170,5.5 Z" fill="#fff" stroke="#000" stroke-width="1"/></svg>
<div class="a" style="left:190px;top:957px">AC Analysis</div>
<div class="a" style="left:255px;top:957px">Transient Analysis</div>
<div class="a" style="left:168px;top:973px;width:1110px;height:2px;background:#fff"></div><div class="a" style="left:1278px;top:363px;width:1px;height:612px;background:#fff"></div>
<div class="a" style="left:0;top:977px;width:51px;height:16px;border-top:1px solid #ACA899;border-left:1px solid #ACA899;border-right:1px solid #fff"></div>
<div class="a" style="left:52px;top:977px;width:1228px;height:16px;border-top:1px solid #ACA899;border-left:1px solid #ACA899"></div><div class="a" style="left:0;top:993px;width:1280px;height:1px;background:#fff"></div>
<div class="a" style="left:0;top:994px;width:1280px;height:30px;background:linear-gradient(#1F4FBF 0%,#3F84F4 8%,#2B6CE8 20%,#245EDB 50%,#2358D6 88%,#1D47B0 100%)"></div>
<div class="a" style="left:1133px;top:994px;width:147px;height:30px;background:linear-gradient(#1A7FE8 0%,#40A8FF 10%,#1690F0 25%,#0F88EC 80%,#1070D0 100%);border-left:1px solid #1060C0"></div>
<div class="a" style="left:0;top:994px;width:98px;height:30px;border-radius:0 12px 12px 0;background:linear-gradient(#2E7A2E 0%,#58B058 8%,#45A545 25%,#389838 60%,#2F8A2F 90%,#246A24 100%);box-shadow:inset -3px 0 3px #2A7A2A"></div>
<svg class="a" style="left:10px;top:999px" width="20" height="19"><path d="M2 3Q5 1 9 3L8 9Q5 7 1 9Z" fill="#F05020"/><path d="M11 3Q14 5 18 3L17 9Q14 11 10 9Z" fill="#60C040"/><path d="M1 10Q4 8 8 10L7 16Q4 14 0 16Z" fill="#3080F0"/><path d="M10 10Q13 12 17 10L16 16Q13 18 9 16Z" fill="#F8D020"/></svg>
<div class="a" style="left:35px;top:999px;color:#fff;font-size:18px;font-weight:bold;font-style:italic;text-shadow:1px 1px 1px #184818">Start</div>
<div class="a" style="left:108px;top:998px;width:160px;height:24px;border-radius:3px;background:#1E49B4;box-shadow:inset 1px 1px 1px #153580"></div>
<svg class="a" style="left:119px;top:1002px" width="16" height="16"><rect x="0.5" y="0.5" width="15" height="15" fill="#FFF6FF" stroke="#F4B8F4"/><path d="M1.5 3.5H10M1.5 5H10M3.5 3V12.5M8.5 5V12" stroke="#6A5A4A" fill="none"/><path d="M5 13H12" stroke="#404040"/><path d="M10.5 2.5L15.5 5.5L10.5 8.5Z" fill="#D02010"/><circle cx="12.5" cy="12.5" r="2.6" fill="#1414B0"/><circle cx="5.5" cy="13" r="2.2" fill="#20A040"/></svg>
<div class="a" style="left:139px;top:1004px;color:#fff;font-size:11px">CircuitMaker</div>
<div class="a" style="left:270px;top:997px;width:157px;height:25px;border-radius:3px;background:linear-gradient(#4A8AF8,#3A7AF0 15%,#3471E8 85%,#2A5CC8);box-shadow:inset 1px 1px 0 #6AA0FF"></div>
<div class="a" style="left:429px;top:997px;width:158px;height:25px;border-radius:3px;background:linear-gradient(#4A8AF8,#3A7AF0 15%,#3471E8 85%,#2A5CC8);box-shadow:inset 1px 1px 0 #6AA0FF"></div>
<svg class="a" style="left:278px;top:1000px" width="16" height="17"><rect x="0.5" y="0.5" width="15" height="16" fill="#10107A" stroke="#000"/><rect x="3" y="1" width="9" height="5" fill="#fff"/><rect x="2" y="8" width="12" height="2" fill="#E02020"/><rect x="2" y="10" width="12" height="2" fill="#fff"/><rect x="2" y="12" width="12" height="2" fill="#E02020"/></svg>
<div class="a" style="left:298px;top:1003px;color:#fff">Total Commander 6.5...</div>
<svg class="a" style="left:438px;top:1000px" width="15" height="16"><rect x="0.5" y="0.5" width="14" height="15" fill="#fff" stroke="#C02020"/><path d="M3 13C5 6 9 3 12 3C8 6 6 9 5 13Z" fill="#D02020"/></svg>
<div class="a" style="left:458px;top:1003px;color:#fff">Adobe Reader - [műv...</div>
<div class="a" style="left:1098px;top:1003px;color:#fff">HU</div>
<svg class="a" style="left:1145px;top:1001px" width="16" height="16"><path d="M1 14L14 3L15 6L4 14Z" fill="#60C040"/><path d="M3 12L12 4" stroke="#2060E0" stroke-width="2"/><path d="M1 15H15" stroke="#fff"/></svg>
<svg class="a" style="left:1162px;top:1000px" width="14" height="17"><path d="M7 1L13 3V8C13 12 10 15 7 16C4 15 1 12 1 8V3Z" fill="#E03030" stroke="#fff" stroke-width="0.8"/><path d="M5 6L9 10M9 6L5 10" stroke="#fff" stroke-width="1.5"/></svg>
<svg class="a" style="left:1180px;top:1000px" width="15" height="16"><path d="M1 5H5L9 1V15L5 11H1Z" fill="#F08040"/><path d="M11 4Q14 8 11 12M13 2Q17 8 13 14" fill="none" stroke="#202020"/></svg>
<svg class="a" style="left:1198px;top:1000px" width="16" height="17"><circle cx="7" cy="7" r="5.5" fill="#A0A0A0" stroke="#606060"/><circle cx="7" cy="7" r="2" fill="#303030"/><path d="M10 12L15 16" stroke="#B0C0E0" stroke-width="2"/></svg>
<svg class="a" style="left:1217px;top:1000px" width="12" height="17"><ellipse cx="6" cy="8.5" rx="5.5" ry="8" fill="#1020A0"/><path d="M3 5L9 11L6 14V3L9 6L3 12" fill="none" stroke="#E02020" stroke-width="1.3"/></svg>
<div class="a" style="left:1241px;top:1003px;color:#fff">4:33</div>
</body></html>
